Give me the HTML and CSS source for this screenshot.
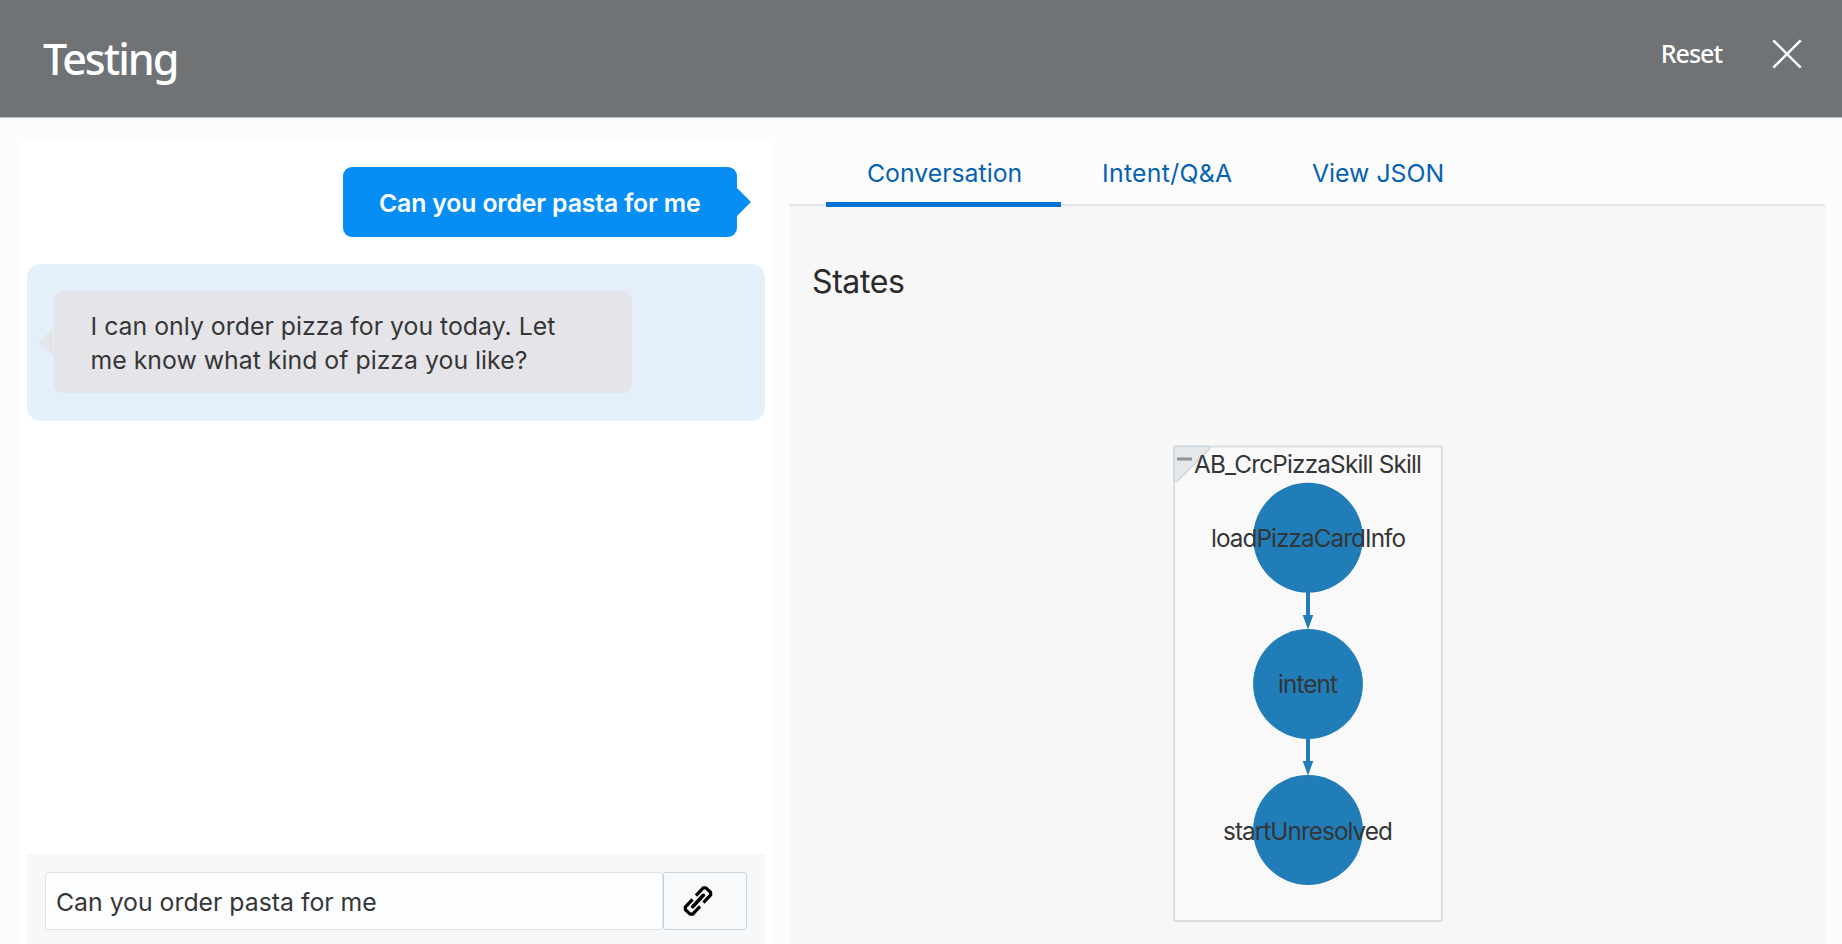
FILE: index.html
```html
<!DOCTYPE html>
<html lang="en">
<head>
<meta charset="utf-8">
<title>Testing</title>
<link rel="stylesheet" href="styles.css">
</head>
<body>
<header class="header">
  <h1 class="title">Testing</h1>
  <div class="actions">
    <button class="reset">Reset</button>
    <button class="close" aria-label="Close"><svg width="30" height="30" viewBox="0 0 30 30"><path d="M1.3 1.3 28.7 28.7M28.7 1.3 1.3 28.7" stroke="#fff" stroke-width="2.5" fill="none"/></svg></button>
  </div>
</header>
<main class="main">
  <section class="chat">
    <div class="messages">
      <div class="bubble user"><span>Can you order pasta for me</span></div>
      <div class="reply">
        <div class="bubble bot"><span>I can only order pizza for you today. Let</span><br><span>me know what kind of pizza you like?</span></div>
      </div>
    </div>
    <div class="composer">
      <div class="input"><span>Can you order pasta for me</span></div>
      <button class="attach" aria-label="Attach link">
        <svg width="30" height="32" viewBox="0 0 30 32"><g transform="translate(15 16) rotate(-47)" fill="none" stroke="#000" stroke-width="3.2" stroke-linejoin="round"><path d="M-2.5 -5.1H-13.2L-15 -3.2V3.2L-13.2 5.1H-2.5"/><path d="M2.5 -5.1H13.2L15 -3.2V3.2L13.2 5.1H2.5"/><path d="M-7.8 0H7.8" stroke-width="3.6" stroke-linecap="round"/></g></svg>
      </button>
    </div>
  </section>
  <section class="inspector">
    <nav class="tabs">
      <a class="tab active">Conversation</a>
      <a class="tab intent">Intent/Q&amp;A</a>
      <a class="tab json">View JSON</a>
    </nav>
    <div class="panel">
      <h2 class="states">States</h2>
      <svg class="diagram" width="270" height="477" viewBox="1173 445 270 477">
        <rect x="1174" y="446.5" width="268" height="474.5" rx="2" fill="#f9f9f9" stroke="#d9dfe3" stroke-width="2"/>
        <path d="M1174 446.5H1209.5V449L1177 481.5H1174Z" fill="#e4e8eb" stroke="#cdd7de" stroke-width="1.5"/>
        <path d="M1177 459H1192" stroke="#8f9395" stroke-width="3"/>
        <g fill="#207db7">
          <circle cx="1308" cy="537.7" r="54.9"/>
          <circle cx="1308" cy="684" r="54.9"/>
          <circle cx="1308" cy="830" r="54.9"/>
          <path d="M1306 592H1310V615H1313.3L1308 629.5 1302.7 615H1306Z"/>
          <path d="M1306 738H1310V761H1313.3L1308 775.5 1302.7 761H1306Z"/>
        </g>
        <g class="labels">
          <text x="1194" y="473" textLength="228">AB_CrcPizzaSkill Skill</text>
          <text x="1211" y="546.7" textLength="195">loadPizzaCardInfo</text>
          <text x="1278" y="692.7" textLength="60">intent</text>
          <text x="1223" y="839.5" textLength="170">startUnresolved</text>
        </g>
      </svg>
    </div>
  </section>
</main>
</body>
</html>
```

FILE: styles.css
```css
* { box-sizing: border-box; }
body {
  margin: 0;
  width: 1842px;
  height: 944px;
  overflow: hidden;
  display: flex;
  flex-direction: column;
  background: #fcfcfc;
  color: #363637;
  font-family: Inter, "Liberation Sans", sans-serif;
  font-size: 24.8px;
}
button { padding: 0; border: 0; background: none; font: inherit; }
svg { display: block; }
span { white-space: nowrap; }
.header {
  height: 118px;
  flex: none;
  display: flex;
  justify-content: space-between;
  background: #6f7376;
  border-bottom: 1px solid #b3bdc6;
  color: #fff;
  font-family: "Noto Sans", "Open Sans", sans-serif;
}
.title { margin: 0; padding: 29px 0 0 43px; font-size: 43px; line-height: 60px; font-weight: 500; letter-spacing: -2px; }
.actions { display: flex; align-items: flex-start; padding: 39px 40px 0 0; gap: 50px; }
.reset { color: #fff; font-size: 25px; line-height: 30px; letter-spacing: -1px; font-weight: 500; margin-top: -1px; }
.main { flex: 1; min-height: 0; display: flex; }
.chat {
  width: 753px;
  margin: 22px 18px 0 19px;
  padding: 0 7px 0 8px;
  display: flex;
  flex-direction: column;
  background: #fff;
}
.messages { flex: 1; display: flex; flex-direction: column; padding-top: 27px; }
.bubble { position: relative; border-radius: 9px; }
.user {
  align-self: flex-end;
  width: 394px;
  height: 70px;
  margin-right: 28px;
  padding-left: 36px;
  line-height: 72px;
  background: #078ef4;
  color: #fff;
  font-weight: 600;
  letter-spacing: -0.15px;
}
.user::after, .bot::before { content: ""; position: absolute; border: 14px solid transparent; }
.user::after { left: 100%; top: 21px; border-right: 0; border-left-color: #078ef4; }
.reply { height: 157px; margin-top: 27px; padding: 27px; border-radius: 14px; background: #e3f0fa; }
.bot { width: 578px; height: 102px; padding: 19px 0 0 36.5px; line-height: 33.5px; letter-spacing: 0.02px; background: #e5e4e9; }
.bot::before { right: calc(100% + 1px); top: 37px; border-left: 0; border-right-color: #e5e4e9; }
.composer { height: 90px; padding: 18px; display: flex; align-items: flex-start; background: #f7f8fa; }
.input { width: 618px; height: 58px; padding-left: 10px; line-height: 59px; border: 1px solid #dfe3e6; border-radius: 3px; background: #fcfdfe; }
.attach { width: 84px; height: 58px; padding-left: 19px; border: 1.5px solid #c7d2db; border-radius: 3px; background: #f8f9fb; }
.inspector { flex: 1; display: flex; flex-direction: column; margin-right: 16px; }
.tabs { position: relative; z-index: 1; height: 89px; display: flex; padding-left: 36px; color: #0561b2; }
.tab { height: 89px; padding-top: 37px; line-height: 36px; }
.active { width: 235px; padding-left: 41px; border-bottom: 5px solid #0572d6; }
.intent { margin-left: 41px; width: 210px; letter-spacing: 0.3px; }
.panel { flex: 1; margin-top: -3px; border-top: 2px solid #dfe6ec; border-top-right-radius: 5px; background: #f7f7f7; }
.states { margin: 0; padding: 56px 0 0 22px; font-size: 32px; line-height: 40px; font-weight: 400; letter-spacing: -0.4px; color: #2b2b2b; }
.diagram { margin: 143px 0 0 383px; }
.labels { font-size: 24.3px; fill: #343536; }
```
